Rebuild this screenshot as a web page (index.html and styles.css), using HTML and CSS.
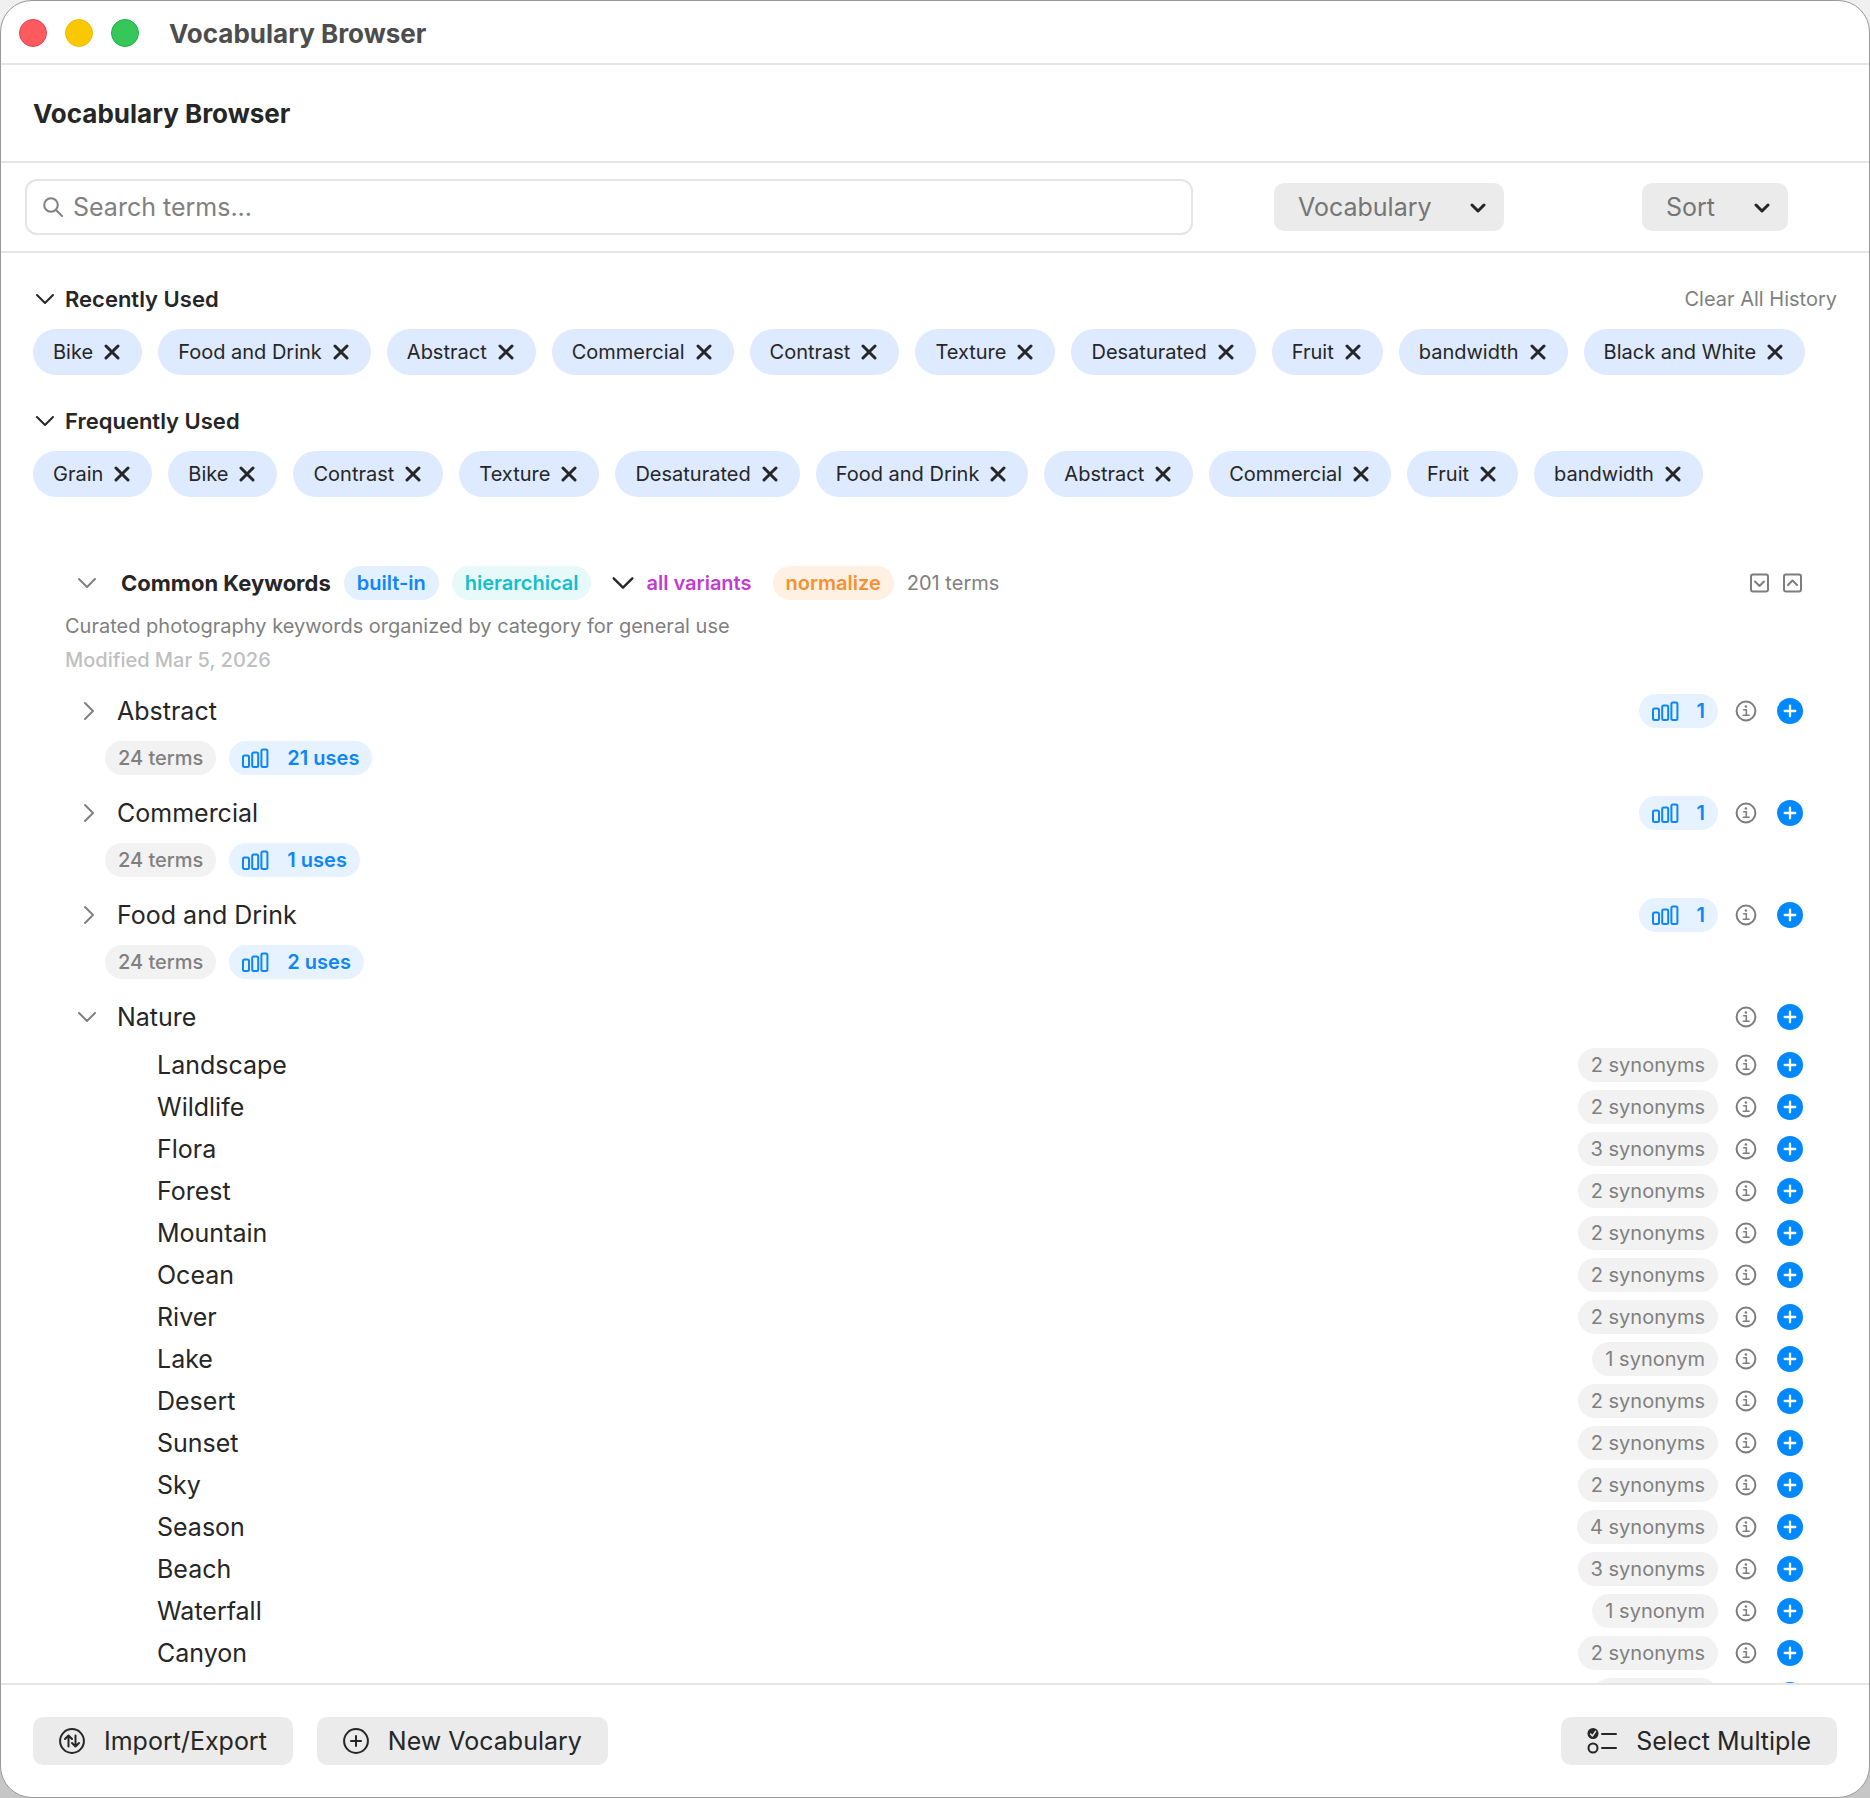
FILE: index.html
```html
<!DOCTYPE html>
<html lang="en">
<head>
    <meta charset="UTF-8">
    <meta name="viewport" content="width=device-width, initial-scale=1.0">
    <title>Vocabulary Browser</title>
    <link rel="stylesheet" href="styles.css">
</head>
<body>
    <!-- shared icons -->
    <svg class="sprite" aria-hidden="true">
        <symbol id="i-down" viewBox="0 0 20 12"><path d="M2 2l8 8 8-8"/></symbol>
        <symbol id="i-right" viewBox="0 0 12 20"><path d="M2 2l8 8-8 8"/></symbol>
        <symbol id="i-x" viewBox="0 0 16 16"><path d="M2 2l12 12M14 2L2 14"/></symbol>
        <symbol id="i-info" viewBox="0 0 22 22">
            <circle cx="11" cy="11" r="9.4"/>
            <path d="M8.7 9.7h2.6v5.4M8.3 15.3h5.8" stroke-width="1.6"/>
            <circle cx="10.9" cy="6.5" r="1.3" fill="currentColor" stroke="none"/>
        </symbol>
        <symbol id="i-plus" viewBox="0 0 26 26">
            <circle cx="13" cy="13" r="13" fill="#0088ff" stroke="none"/>
            <path d="M13 7.700v10.600M7.700 13h10.600" stroke="#fff" stroke-width="2.300"/>
        </symbol>
        <symbol id="i-bars" viewBox="0 0 27 20">
            <rect x="1" y="7.500" width="6" height="11.500" rx="1.500"/>
            <rect x="10.200" y="4.500" width="6" height="14.500" rx="1.500"/>
            <rect x="19.400" y="1.500" width="6" height="17.500" rx="1.500"/>
        </symbol>
    </svg>

    <div class="window">
        <div class="titlebar">
            <span class="light red"></span>
            <span class="light yellow"></span>
            <span class="light green"></span>
            <span class="titlebar-text">Vocabulary Browser</span>
        </div>

        <header class="header">
            <h1>Vocabulary Browser</h1>
        </header>

        <form class="toolbar">
            <div class="search">
                <svg class="icon-search" viewBox="0 0 20 20"><circle cx="8" cy="8" r="6.8"/><path d="M13 13l6 6"/></svg>
                <input type="text" placeholder="Search terms..." aria-label="Search terms">
            </div>
            <div class="filter filter-vocabulary">
                <div class="picker">
                    <select aria-label="Vocabulary"><option>Vocabulary</option></select>
                    <svg class="icon-picker" viewBox="0 0 16 10"><path d="M2 2l6 6 6-6"/></svg>
                </div>
            </div>
            <div class="filter filter-sort">
                <div class="picker">
                    <select aria-label="Sort"><option>Sort</option></select>
                    <svg class="icon-picker" viewBox="0 0 16 10"><path d="M2 2l6 6 6-6"/></svg>
                </div>
            </div>
        </form>

        <main class="content">
            <section class="history">
                <div class="history-head">
                    <svg class="icon-down"><use href="#i-down"/></svg>
                    <h2>Recently Used</h2>
                    <button type="button" class="clear">Clear All History</button>
                </div>
                <div class="chips">
                    <button type="button" class="chip">Bike<svg><use href="#i-x"/></svg></button>
                    <button type="button" class="chip">Food and Drink<svg><use href="#i-x"/></svg></button>
                    <button type="button" class="chip">Abstract<svg><use href="#i-x"/></svg></button>
                    <button type="button" class="chip">Commercial<svg><use href="#i-x"/></svg></button>
                    <button type="button" class="chip">Contrast<svg><use href="#i-x"/></svg></button>
                    <button type="button" class="chip">Texture<svg><use href="#i-x"/></svg></button>
                    <button type="button" class="chip">Desaturated<svg><use href="#i-x"/></svg></button>
                    <button type="button" class="chip">Fruit<svg><use href="#i-x"/></svg></button>
                    <button type="button" class="chip">bandwidth<svg><use href="#i-x"/></svg></button>
                    <button type="button" class="chip">Black and White<svg><use href="#i-x"/></svg></button>
                </div>
            </section>

            <section class="history">
                <div class="history-head">
                    <svg class="icon-down"><use href="#i-down"/></svg>
                    <h2>Frequently Used</h2>
                </div>
                <div class="chips">
                    <button type="button" class="chip">Grain<svg><use href="#i-x"/></svg></button>
                    <button type="button" class="chip">Bike<svg><use href="#i-x"/></svg></button>
                    <button type="button" class="chip">Contrast<svg><use href="#i-x"/></svg></button>
                    <button type="button" class="chip">Texture<svg><use href="#i-x"/></svg></button>
                    <button type="button" class="chip">Desaturated<svg><use href="#i-x"/></svg></button>
                    <button type="button" class="chip">Food and Drink<svg><use href="#i-x"/></svg></button>
                    <button type="button" class="chip">Abstract<svg><use href="#i-x"/></svg></button>
                    <button type="button" class="chip">Commercial<svg><use href="#i-x"/></svg></button>
                    <button type="button" class="chip">Fruit<svg><use href="#i-x"/></svg></button>
                    <button type="button" class="chip">bandwidth<svg><use href="#i-x"/></svg></button>
                </div>
            </section>

            <section class="vocabulary">
                <div class="vocabulary-head">
                    <svg class="icon-down muted"><use href="#i-down"/></svg>
                    <h2>Common Keywords</h2>
                    <span class="tag blue">built-in</span>
                    <span class="tag teal">hierarchical</span>
                    <span class="variants"><svg><use href="#i-down"/></svg>all variants</span>
                    <span class="tag orange">normalize</span>
                    <span class="count">201 terms</span>
                    <div class="fold">
                        <button type="button" class="icon-button" aria-label="Expand all"><svg class="icon-fold" viewBox="0 0 20 20"><rect x="1" y="1.500" width="17" height="17" rx="2"/><path d="M5 8.500l4.500 4.500L14 8.500"/></svg></button>
                        <button type="button" class="icon-button" aria-label="Collapse all"><svg class="icon-fold" viewBox="0 0 20 20"><rect x="1" y="1.500" width="17" height="17" rx="2"/><path d="M5 12l4.500-4.500L14 12"/></svg></button>
                    </div>
                </div>
                <p class="description">Curated photography keywords organized by category for general use</p>
                <p class="modified">Modified Mar 5, 2026</p>

                <ul class="tree">
                    <li class="category">
                        <div class="row">
                            <span class="toggle"><svg class="icon-right"><use href="#i-right"/></svg></span>
                            <span class="name">Abstract</span>
                            <span class="tag uses"><svg><use href="#i-bars"/></svg>1</span>
                            <button type="button" class="icon-button" aria-label="Info"><svg class="icon-info"><use href="#i-info"/></svg></button>
                            <button type="button" class="icon-button" aria-label="Add"><svg class="icon-plus"><use href="#i-plus"/></svg></button>
                        </div>
                        <div class="stats">
                            <span class="tag grey strong">24 terms</span>
                            <span class="tag uses"><svg><use href="#i-bars"/></svg>21 uses</span>
                        </div>
                    </li>
                    <li class="category">
                        <div class="row">
                            <span class="toggle"><svg class="icon-right"><use href="#i-right"/></svg></span>
                            <span class="name">Commercial</span>
                            <span class="tag uses"><svg><use href="#i-bars"/></svg>1</span>
                            <button type="button" class="icon-button" aria-label="Info"><svg class="icon-info"><use href="#i-info"/></svg></button>
                            <button type="button" class="icon-button" aria-label="Add"><svg class="icon-plus"><use href="#i-plus"/></svg></button>
                        </div>
                        <div class="stats">
                            <span class="tag grey strong">24 terms</span>
                            <span class="tag uses"><svg><use href="#i-bars"/></svg>1 uses</span>
                        </div>
                    </li>
                    <li class="category">
                        <div class="row">
                            <span class="toggle"><svg class="icon-right"><use href="#i-right"/></svg></span>
                            <span class="name">Food and Drink</span>
                            <span class="tag uses"><svg><use href="#i-bars"/></svg>1</span>
                            <button type="button" class="icon-button" aria-label="Info"><svg class="icon-info"><use href="#i-info"/></svg></button>
                            <button type="button" class="icon-button" aria-label="Add"><svg class="icon-plus"><use href="#i-plus"/></svg></button>
                        </div>
                        <div class="stats">
                            <span class="tag grey strong">24 terms</span>
                            <span class="tag uses"><svg><use href="#i-bars"/></svg>2 uses</span>
                        </div>
                    </li>
                    <li class="category">
                        <div class="row">
                            <span class="toggle"><svg class="icon-down muted"><use href="#i-down"/></svg></span>
                            <span class="name">Nature</span>
                            <button type="button" class="icon-button" aria-label="Info"><svg class="icon-info"><use href="#i-info"/></svg></button>
                            <button type="button" class="icon-button" aria-label="Add"><svg class="icon-plus"><use href="#i-plus"/></svg></button>
                        </div>
                        <ul class="terms" id="natureTerms"></ul>
                    </li>
                </ul>
            </section>
        </main>

        <footer class="footer">
            <button type="button" class="action">
                <svg class="icon-action" viewBox="0 0 26 26"><circle cx="13" cy="13" r="11.9"/><path d="M9.500 18.500V7.500M6 11l3.500-3.500L13 11M16.500 7.500v11M13 15l3.500 3.500L20 15"/></svg>
                Import/Export
            </button>
            <button type="button" class="action">
                <svg class="icon-action" viewBox="0 0 26 26"><circle cx="13" cy="13" r="11.9"/><path d="M13 8v10M8 13h10"/></svg>
                New Vocabulary
            </button>
            <button type="button" class="action select-multiple">
                <svg class="icon-checklist" viewBox="0 0 30 26">
                    <circle cx="6" cy="5.500" r="5.500" fill="currentColor" stroke="none"/>
                    <path d="M3.600 6l1.800 2 3.200-4.600" stroke="#ebebeb" stroke-width="1.500"/>
                    <circle cx="6" cy="20" r="4.500"/>
                    <path d="M15 6h14M15 20h14"/>
                </svg>
                Select Multiple
            </button>
        </footer>
    </div>

    <script>
        var natureTerms = [
            ["Landscape", 2], ["Wildlife", 2], ["Flora", 3], ["Forest", 2],
            ["Mountain", 2], ["Ocean", 2], ["River", 2], ["Lake", 1],
            ["Desert", 2], ["Sunset", 2], ["Sky", 2], ["Season", 4],
            ["Beach", 3], ["Waterfall", 1], ["Canyon", 2]
        ];
        var buttons = '<button type="button" class="icon-button" aria-label="Info"><svg class="icon-info"><use href="#i-info"/></svg></button>' +
            '<button type="button" class="icon-button" aria-label="Add"><svg class="icon-plus"><use href="#i-plus"/></svg></button>';

        var html = natureTerms.map(function(term) {
            return '<li class="row">' +
                '<span class="name">' + term[0] + '</span>' +
                '<span class="tag grey">' + term[1] + (term[1] === 1 ? ' synonym' : ' synonyms') + '</span>' +
                buttons + '</li>';
        }).join("");

        html += '<li class="row"><span class="name"></span><span class="tag grey loading"></span>' + buttons + '</li>';

        document.getElementById("natureTerms").innerHTML = html;
    </script>
</body>
</html>
```
FILE: styles.css
```css
* {
    box-sizing: border-box;
}
body {
    margin: 0;
    background: linear-gradient(#f0f0f0, #c6c6c6);
    color: #262626;
    font-family: Inter, "Liberation Sans", sans-serif;
    font-size: 25px;
}
h1, h2, p, ul {
    margin: 0;
    padding: 0;
}
ul {
    list-style: none;
}
button, input, select {
    font: inherit;
    color: inherit;
}
svg {
    display: block;
    flex: none;
    fill: none;
    stroke: currentColor;
    stroke-width: 2;
    stroke-linecap: round;
    stroke-linejoin: round;
}
.sprite {
    position: absolute;
    width: 0;
    height: 0;
}
.window {
    display: flex;
    flex-direction: column;
    height: 100vh;
    background: #fff;
    border: 1px solid #999;
    border-radius: 32px;
    overflow: hidden;
}

/* title bar */
.titlebar {
    display: flex;
    align-items: center;
    gap: 18px;
    height: 64px;
    padding: 2px 0 0 18px;
    border-bottom: 2px solid #e5e5e5;
    flex: none;
}
.light {
    width: 28px;
    height: 28px;
    border-radius: 50%;
    border: 1px solid;
}
.red {
    background: #ff5a5f;
    border-color: #e0444b;
}
.yellow {
    background: #fac800;
    border-color: #eebb00;
}
.green {
    background: #35c759;
    border-color: #1fb045;
}
.titlebar-text {
    margin-left: 12px;
    font-size: 26px;
    font-weight: 700;
    color: #4d4d4d;
}
.header {
    display: flex;
    align-items: center;
    height: 98px;
    padding: 0 32px;
    border-bottom: 2px solid #e5e5e5;
    flex: none;
}
h1 {
    font-size: 26px;
    font-weight: 700;
}

/* search and filters */
.toolbar {
    display: flex;
    align-items: center;
    gap: 16px;
    height: 90px;
    padding: 0 24px;
    border-bottom: 2px solid #e5e5e5;
    flex: none;
}
.search {
    display: flex;
    align-items: center;
    gap: 10px;
    flex: 1;
    height: 56px;
    padding: 0 16px;
    border: 2px solid #e5e5e5;
    border-radius: 12px;
}
.search input {
    flex: 1;
    min-width: 0;
    padding: 0;
    border: none;
    outline: none;
    background: none;
}
.search input::placeholder {
    color: #808080;
}
.icon-search {
    width: 20px;
    height: 20px;
    color: #808080;
}
.filter {
    display: flex;
    justify-content: center;
}
.filter-vocabulary {
    width: 360px;
}
.filter-sort {
    width: 260px;
}
.picker {
    position: relative;
}
.picker select {
    appearance: none;
    height: 48px;
    padding: 0 72px 0 24px;
    border: none;
    border-radius: 10px;
    background: #ebebeb;
    color: #757575;
}
.icon-picker {
    position: absolute;
    right: 18px;
    top: 20px;
    width: 16px;
    height: 10px;
    stroke-width: 3;
    pointer-events: none;
}

.content {
    flex: 1;
    min-height: 0;
    padding: 31px 32px 0;
    overflow: hidden;
}

/* recent and frequent chips */
.history {
    margin-bottom: 31px;
}
.history-head {
    display: flex;
    align-items: center;
    height: 30px;
    margin-bottom: 15px;
}
.icon-down {
    width: 20px;
    height: 12px;
}
.muted {
    color: #808080;
}
.history-head .icon-down {
    margin: 0 10px 0 2px;
}
.history-head h2 {
    font-size: 22px;
    font-weight: 600;
}
.clear {
    margin-left: auto;
    padding: 0;
    border: none;
    background: none;
    color: #808080;
    font-size: 20px;
}
.chips {
    display: flex;
    gap: 16px;
}
.chip {
    display: flex;
    align-items: center;
    gap: 11px;
    height: 46px;
    padding: 0 22px 0 20px;
    border: none;
    border-radius: 23px;
    background: #deeaff;
    font-size: 20px;
    white-space: nowrap;
}
.chip svg {
    width: 16px;
    height: 16px;
    stroke-width: 3;
}

/* vocabulary */
.vocabulary {
    margin-top: 69px;
    padding: 0 34px 0 32px;
}
.vocabulary-head {
    display: flex;
    align-items: center;
    gap: 13px;
    height: 34px;
}
.vocabulary-head .icon-down {
    margin: 0 11px 0 12px;
}
.vocabulary-head h2 {
    font-size: 22px;
    font-weight: 700;
}
.tag {
    display: flex;
    align-items: center;
    height: 34px;
    padding: 0 13px;
    border-radius: 17px;
    font-size: 20px;
    font-weight: 600;
    white-space: nowrap;
}
.blue {
    background: #e3f0ff;
    color: #0f85ff;
}
.teal {
    background: #e8f9fa;
    color: #12bfca;
}
.orange {
    background: #fff0e4;
    color: #f49133;
}
.grey {
    background: #f2f2f2;
    color: #808080;
    font-weight: 400;
}
.strong {
    font-weight: 500;
}
.loading {
    width: 125px;
}
.uses {
    gap: 18px;
    background: #e6f2ff;
    color: #0f86f8;
}
.uses svg {
    width: 27px;
    height: 20px;
}
.variants {
    display: flex;
    align-items: center;
    gap: 11px;
    margin: 0 8px 0 7px;
    color: #c23bd3;
    font-size: 20px;
    font-weight: 600;
}
.variants svg {
    width: 24px;
    height: 14px;
    color: #262626;
}
.count {
    color: #808080;
    font-size: 20px;
}
.fold {
    display: flex;
    gap: 13px;
    margin-left: auto;
}
.icon-button {
    padding: 0;
    border: none;
    background: none;
    color: #7d7d7d;
}
.icon-fold {
    width: 20px;
    height: 20px;
}
.description, .modified {
    font-size: 20px;
    line-height: 34px;
    color: #808080;
}
.description {
    margin-top: 9px;
}
.modified {
    color: #bfbfbf;
    font-weight: 500;
}

/* term tree */
.tree {
    margin-top: 13px;
}
.category {
    margin-bottom: 17px;
}
.row {
    display: flex;
    align-items: center;
    height: 42px;
}
.toggle {
    display: flex;
    justify-content: center;
    width: 20px;
    margin: 0 20px 0 12px;
}
.icon-right {
    width: 12px;
    height: 20px;
    margin-left: 4px;
    color: #808080;
}
.name {
    margin-right: auto;
}
.icon-info {
    width: 22px;
    height: 22px;
    margin-left: 17px;
}
.icon-plus {
    width: 26px;
    height: 26px;
    margin-left: 20px;
}
.stats {
    display: flex;
    gap: 13px;
    margin-top: 9px;
    padding-left: 40px;
}
.terms {
    margin-top: 6px;
    padding-left: 92px;
}

/* bottom bar */
.footer {
    display: flex;
    align-items: center;
    gap: 24px;
    height: 114px;
    padding: 0 32px;
    border-top: 2px solid #e5e5e5;
    flex: none;
}
.action {
    display: flex;
    align-items: center;
    gap: 19px;
    height: 48px;
    padding: 0 26px;
    border: none;
    border-radius: 10px;
    background: #ebebeb;
}
.icon-action {
    width: 26px;
    height: 26px;
}
.select-multiple {
    margin-left: auto;
}
.icon-checklist {
    width: 30px;
    height: 26px;
}
```
